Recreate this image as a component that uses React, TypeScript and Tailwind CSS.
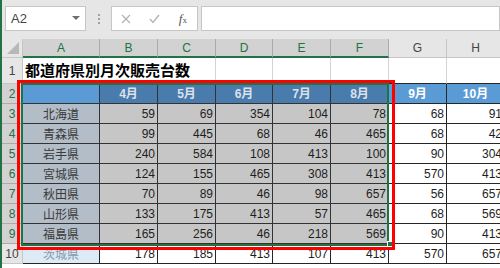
import React from "react";

const colW = [
  "w-[77px]",
  "w-[58px]",
  "w-[58px]",
  "w-[57px]",
  "w-[58px]",
  "w-[58px]",
  "w-[58px]",
  "w-[58px]",
];
const letters = ["A", "B", "C", "D", "E", "F", "G", "H"];
const months = ["4月", "5月", "6月", "7月", "8月", "9月", "10月"];

const data: [string, number[]][] = [
  ["北海道", [59, 69, 354, 104, 78, 68, 91]],
  ["青森県", [99, 445, 68, 46, 465, 68, 42]],
  ["岩手県", [240, 584, 108, 413, 100, 90, 304]],
  ["宮城県", [124, 155, 465, 308, 413, 570, 413]],
  ["秋田県", [70, 89, 46, 98, 657, 56, 657]],
  ["山形県", [133, 175, 413, 57, 465, 68, 569]],
  ["福島県", [165, 256, 46, 218, 569, 90, 413]],
  ["茨城県", [178, 185, 413, 107, 413, 570, 657]],
];

function RowHead({ n, sel, h }: { n: number; sel: boolean; h: string }) {
  return (
    <div
      className={`w-[21px] shrink-0 ${h} flex items-center justify-center border-r border-b text-[12px] ${
        sel
          ? "bg-[#d2d2d2] text-[#217346] border-[#ababab]"
          : "bg-[#e6e6e6] text-[#444444] border-[#c6c6c6]"
      }`}
    >
      {n}
    </div>
  );
}

export default function App() {
  return (
    <div className="relative w-[500px] h-[268px] overflow-hidden bg-white border-l-2 border-[#217346] font-['Liberation_Sans','Noto_Sans_CJK_JP',sans-serif]">
      {/* toolbar */}
      <div className="h-[39px] bg-[#e6e6e6] flex items-start pt-[6px] pl-[3px]">
        <div className="w-[81px] h-[25px] shrink-0 bg-white border border-[#c6c6c6] flex items-center pl-[5px] pr-[5px] text-[13px] text-[#444444]">
          <span className="flex-1">A2</span>
          <svg width="8" height="5" viewBox="0 0 8 5">
            <path d="M0 0 L8 0 L4 4 Z" fill="#6e6e6e" />
          </svg>
        </div>
        <div className="w-[25px] h-[25px] shrink-0 flex flex-col items-center justify-center gap-[2px]">
          <div className="w-[2px] h-[2px] bg-[#a0a0a0]" />
          <div className="w-[2px] h-[2px] bg-[#a0a0a0]" />
          <div className="w-[2px] h-[2px] bg-[#a0a0a0]" />
        </div>
        <div className="w-[87px] h-[25px] shrink-0 bg-white border border-[#c6c6c6] flex items-center">
          <span className="w-[29px] flex justify-center">
            <svg width="10" height="10" viewBox="0 0 10 10">
              <path d="M1 1 L9 9 M9 1 L1 9" stroke="#b4b4b4" strokeWidth="1.3" fill="none" />
            </svg>
          </span>
          <span className="w-[29px] flex justify-center">
            <svg width="11" height="10" viewBox="0 0 11 10">
              <path d="M1 5 L4 8.5 L10 1" stroke="#b4b4b4" strokeWidth="1.4" fill="none" />
            </svg>
          </span>
          <span className="w-[29px] flex justify-center text-[13px] italic text-[#555555] font-['Liberation_Serif',serif] leading-none">
            f<span className="text-[9px] not-italic mt-[4px]">x</span>
          </span>
        </div>
        <div className="ml-[3px] flex-1 h-[25px] bg-white border border-[#c6c6c6]" />
      </div>

      {/* column header */}
      <div className="flex h-[19px] w-max">
        <div className="relative w-[21px] shrink-0 h-full bg-[#e6e6e6] border-r border-b border-[#c6c6c6]">
          <svg className="absolute right-[3px] bottom-[3px]" width="12" height="12" viewBox="0 0 12 12">
            <path d="M12 0 L12 12 L0 12 Z" fill="#b8b8b8" />
          </svg>
        </div>
        {letters.map((l, i) => (
          <div
            key={l}
            className={`${colW[i]} shrink-0 h-full flex items-center justify-center text-[12px] border-r ${
              i < 6
                ? "bg-[#d2d2d2] text-[#217346] border-r-[#ababab] border-b-2 border-b-[#217346]"
                : "bg-[#e6e6e6] text-[#444444] border-r-[#c6c6c6] border-b border-b-[#c6c6c6]"
            }`}
          >
            {l}
          </div>
        ))}
      </div>

      {/* row 1 */}
      <div className="flex h-[26px] w-max">
        <RowHead n={1} sel={false} h="h-full" />
        {letters.map((l, i) => (
          <div
            key={l}
            className={`${colW[i]} shrink-0 h-full border-b border-b-[#262626] ${
              i < 2 ? "" : "border-r border-r-[#d4d4d4]"
            } ${i === 0 ? "relative" : ""}`}
          >
            {i === 0 && (
              <div className="absolute left-[2px] top-0 h-full flex items-center whitespace-nowrap text-[15px] font-bold text-black z-10 font-['Noto_Sans_CJK_JP',sans-serif]">
                都道府県別月次販売台数
              </div>
            )}
          </div>
        ))}
      </div>

      {/* row 2 header */}
      <div className="flex h-[20px] w-max">
        <RowHead n={2} sel={true} h="h-full" />
        {letters.map((l, i) => (
          <div
            key={l}
            className={`${colW[i]} shrink-0 h-full border-r border-b flex items-center justify-center text-[12px] font-bold ${
              i === 0
                ? "bg-[#5b9bd5] border-[#333333]"
                : i < 6
                ? "bg-[#4a7bad] text-[#dce2ea] border-[#333333]"
                : "bg-[#5b9bd5] text-white border-[#262626]"
            }`}
          >
            {i === 0 ? "" : months[i - 1]}
          </div>
        ))}
      </div>

      {/* data rows */}
      {data.map(([name, vals], r) => {
        const sel = r < 7;
        return (
          <div key={name} className="flex h-[20px] w-max">
            <RowHead n={r + 3} sel={sel} h="h-full" />
            <div
              className={`${colW[0]} shrink-0 h-full border-r border-b flex items-center justify-center text-[12px] font-['Noto_Sans_CJK_JP',sans-serif] ${
                sel
                  ? "bg-[#b3bdc8] text-[#3a3a3a] border-[#333333]"
                  : "bg-[#ddebf7] text-[#8796a6] border-[#262626]"
              }`}
            >
              {name}
            </div>
            {vals.map((v, i) => (
              <div
                key={i}
                className={`${colW[i + 1]} shrink-0 h-full border-r border-b flex items-center justify-end pr-[2px] text-[12px] ${
                  sel && i < 5
                    ? "bg-[#c6c6c6] text-[#1e1e1e] border-[#333333]"
                    : "bg-white text-[#1e1e1e] border-[#262626]"
                }`}
              >
                {v}
              </div>
            ))}
          </div>
        );
      })}

      {/* selection & annotation overlays */}
      <div className="absolute left-[19px] top-[83px] w-[368px] h-[163px] border-2 border-[#217346] pointer-events-none" />
      <div className="absolute left-[385px] top-[241px] w-[6px] h-[6px] bg-[#217346] border border-white pointer-events-none" />
      <div className="absolute left-[15px] top-[80px] w-[378px] h-[170px] border-[3px] border-[#ff0000] pointer-events-none" />
    </div>
  );
}
